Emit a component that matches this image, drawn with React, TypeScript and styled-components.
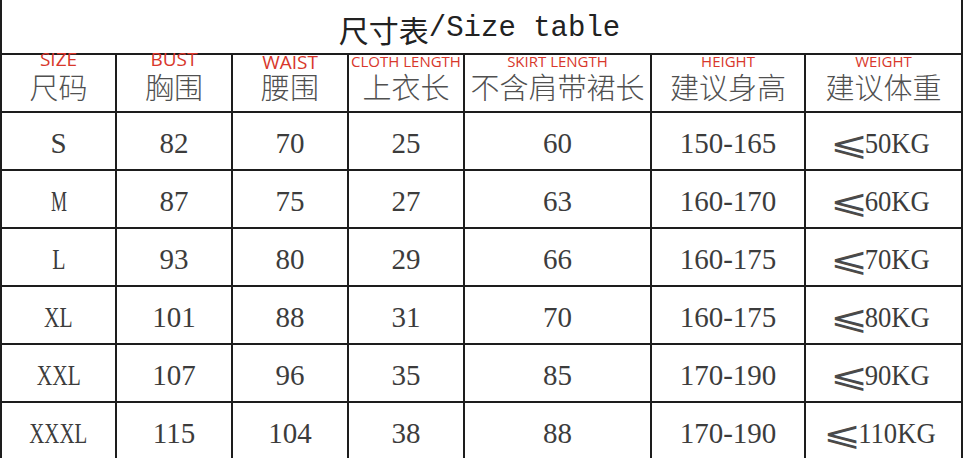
import { Fragment } from "react";
import styled, { createGlobalStyle } from "styled-components";

const GlobalStyle = createGlobalStyle`
  html, body {
    margin: 0;
    padding: 0;
    background: #fff;
  }
  body {
    font-family: "Noto Sans", "Noto Sans CJK SC", sans-serif;
  }
`;

const Sheet = styled.div`
  width: 963px;
  height: 458px;
  overflow: hidden;
  box-sizing: border-box;
  display: grid;
  grid-template-columns: 113px 114px 114px 114px 185px 152px 155px;
  grid-template-rows: 53px;
  grid-auto-rows: 56px;
  gap: 2px;
  padding: 0 2px;
  background: #1d1d1d;
`;

const TitleCell = styled.div`
  grid-column: 1 / -1;
  background: #fff;
  display: flex;
  align-items: center;
  justify-content: center;
  padding: 4px 4px 0 0;
  color: #222;
`;

const TitleZh = styled.span`
  font-family: "Noto Sans CJK SC", sans-serif;
  font-size: 30px;
  line-height: 1;
`;

const TitleEn = styled.span`
  font-family: "Liberation Mono", monospace;
  font-size: 29px;
  line-height: 1;
`;

const HeadCell = styled.div`
  background: #fff;
  display: flex;
  flex-direction: column;
  align-items: center;
`;

const HeadEn = styled.span<{ $size: number; $drop: number }>`
  display: block;
  height: 15px;
  line-height: 15px;
  font-family: "Open Sans", "Noto Sans", sans-serif;
  font-size: ${(p) => p.$size}px;
  color: #d8372b;
  white-space: nowrap;
  margin-top: ${(p) => p.$drop - 1}px;
  margin-bottom: ${(p) => 1 - p.$drop}px;
`;

const HeadZh = styled.span`
  display: block;
  margin-top: 2px;
  font-family: "Noto Sans CJK SC", sans-serif;
  font-weight: 300;
  font-size: 29px;
  line-height: 1;
  color: #505050;
  white-space: nowrap;
`;

const Cell = styled.div`
  background: #fff;
  display: flex;
  align-items: center;
  justify-content: center;
  padding-top: 4px;
  font-family: "Liberation Serif", "DejaVu Sans", serif;
  font-size: 29px;
  color: #3c3c3c;
`;

const Value = styled.span<{ $squeeze: number }>`
  display: inline-block;
  white-space: nowrap;
  transform: scaleX(${(p) => p.$squeeze});
`;

const Sign = styled.span`
  display: inline-block;
  font-family: "DejaVu Sans ExtraLight", "DejaVu Sans", sans-serif;
  font-weight: 200;
  font-size: 33px;
  line-height: 1;
  vertical-align: -2px;
  transform: scaleX(1.5);
  margin: 0 3px 0 -1px;
  color: #4a4a4a;
`;

const headers = [
  { en: "SIZE", zh: "尺码", size: 19, drop: -2 },
  { en: "BUST", zh: "胸围", size: 19, drop: -2 },
  { en: "WAIST", zh: "腰围", size: 19, drop: 1 },
  { en: "CLOTH LENGTH", zh: "上衣长", size: 15, drop: 0 },
  { en: "SKIRT LENGTH", zh: "不含肩带裙长", size: 15, drop: 0 },
  { en: "HEIGHT", zh: "建议身高", size: 15, drop: 0 },
  { en: "WEIGHT", zh: "建议体重", size: 15, drop: 0 },
];

const rows = [
  { size: "S", squeeze: 1, values: ["82", "70", "25", "60", "150-165"], weight: "50KG" },
  { size: "M", squeeze: 0.62, values: ["87", "75", "27", "63", "160-170"], weight: "60KG" },
  { size: "L", squeeze: 0.75, values: ["93", "80", "29", "66", "160-175"], weight: "70KG" },
  { size: "XL", squeeze: 0.74, values: ["101", "88", "31", "70", "160-175"], weight: "80KG" },
  { size: "XXL", squeeze: 0.74, values: ["107", "96", "35", "85", "170-190"], weight: "90KG" },
  { size: "XXXL", squeeze: 0.72, values: ["115", "104", "38", "88", "170-190"], weight: "110KG" },
];

export default function App() {
  return (
    <>
      <GlobalStyle />
      <Sheet>
        <TitleCell>
          <TitleZh>尺寸表</TitleZh>
          <TitleEn>/Size table</TitleEn>
        </TitleCell>
        {headers.map((h) => (
          <HeadCell key={h.en}>
            <HeadEn $size={h.size} $drop={h.drop}>{h.en}</HeadEn>
            <HeadZh>{h.zh}</HeadZh>
          </HeadCell>
        ))}
        {rows.map((r) => (
          <Fragment key={r.size}>
            <Cell>
              <Value $squeeze={r.squeeze}>{r.size}</Value>
            </Cell>
            {r.values.map((v, i) => (
              <Cell key={i}>
                <Value $squeeze={1}>{v}</Value>
              </Cell>
            ))}
            <Cell>
              <Value $squeeze={0.92}>
                <Sign>⩽</Sign>
                {r.weight}
              </Value>
            </Cell>
          </Fragment>
        ))}
      </Sheet>
    </>
  );
}
